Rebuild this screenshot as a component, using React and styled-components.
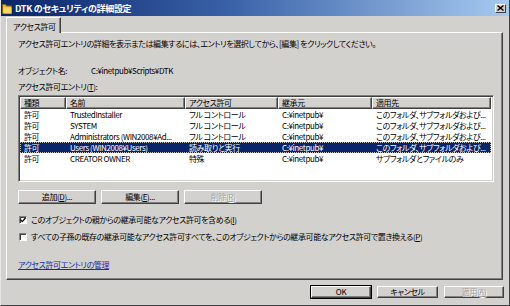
import React from "react";
import styled, { createGlobalStyle, css } from "styled-components";

const Global = createGlobalStyle`
  html, body {
    margin: 0;
    padding: 0;
    background: #d2d1ce;
    overflow: hidden;
  }
  body {
    font-family: "Noto Sans CJK JP", "Liberation Sans", sans-serif;
    font-size: 8px;
    letter-spacing: -0.4px;
    font-feature-settings: "palt";
    color: #000;
  }
`;

const face = "#d2d1ce";

const entries = [
  { kind: "許可", name: "TrustedInstaller", access: "フル コントロール", from: "C:¥inetpub¥", to: "このフォルダ、サブフォルダおよび..." },
  { kind: "許可", name: "SYSTEM", access: "フル コントロール", from: "C:¥inetpub¥", to: "このフォルダ、サブフォルダおよび..." },
  { kind: "許可", name: "Administrators (WIN2008¥Ad...", access: "フル コントロール", from: "C:¥inetpub¥", to: "このフォルダ、サブフォルダおよび..." },
  { kind: "許可", name: "Users (WIN2008¥Users)", access: "読み取りと実行", from: "C:¥inetpub¥", to: "このフォルダ、サブフォルダおよび...", selected: true },
  { kind: "許可", name: "CREATOR OWNER", access: "特殊", from: "C:¥inetpub¥", to: "サブフォルダとファイルのみ" },
];

const columns = "46px 119px 93px 94px 1fr";

const App = () => {
  return (
    <>
      <Global />
      <Window>
        <TitleBar>
          <FolderIcon width="10" height="12" viewBox="0 0 10 12">
            <path d="M0.5 2.5h3l1 1.5h5v7.5h-9z" fill="#e8b830" stroke="#8a6410" strokeWidth="1" />
            <path d="M1.5 5.5h8v6h-8z" fill="#f8d860" />
          </FolderIcon>
          <Title>DTK のセキュリティの詳細設定</Title>
          <CloseButton>
            <svg width="7" height="6" viewBox="0 0 7 6">
              <path d="M0.5 0.5l6 5M6.5 0.5l-6 5" stroke="#000" strokeWidth="1.4" />
            </svg>
          </CloseButton>
        </TitleBar>

        <Main>
          <Tabs>
            <Tab>アクセス許可</Tab>
          </Tabs>
          <Panel>
            <Line $top={5}>
              アクセス許可エントリの詳細を表示または編集するには、エントリを選択してから、[編集] をクリックしてください。
            </Line>
            <ObjectRow>
              <ObjectLabel>オブジェクト名:</ObjectLabel>
              <span>C:¥inetpub¥Scripts¥DTK</span>
            </ObjectRow>
            <Line $top={4}>アクセス許可エントリ(<u>T</u>):</Line>

            <ListBox>
              <HeaderRow>
                <HeaderCell>種類</HeaderCell>
                <HeaderCell>名前</HeaderCell>
                <HeaderCell>アクセス許可</HeaderCell>
                <HeaderCell>継承元</HeaderCell>
                <HeaderCell>適用先</HeaderCell>
              </HeaderRow>
              {entries.map((e) => (
                <Row key={e.name} $selected={e.selected}>
                  <Cell>{e.kind}</Cell>
                  <Cell>{e.name}</Cell>
                  <Cell>{e.access}</Cell>
                  <Cell>{e.from}</Cell>
                  <Cell>{e.to}</Cell>
                </Row>
              ))}
            </ListBox>

            <ButtonRow>
              <Button $w={78}>追加(<u>D</u>)...</Button>
              <Button $w={78}>編集(<u>E</u>)...</Button>
              <Button $w={78} disabled>削除(<u>R</u>)</Button>
            </ButtonRow>

            <CheckRow $top={10}>
              <CheckBox>
                <svg width="6" height="6" viewBox="0 0 6 6">
                  <path d="M0.5 2.8l1.8 1.8 3.2-3.6" stroke="#000" strokeWidth="1.3" fill="none" />
                </svg>
              </CheckBox>
              <span>このオブジェクトの親からの継承可能なアクセス許可を含める(<u>I</u>)</span>
            </CheckRow>
            <CheckRow $top={5}>
              <CheckBox />
              <span>
                すべての子孫の既存の継承可能なアクセス許可すべてを、このオブジェクトからの継承可能なアクセス許可で置き換える(<u>P</u>)
              </span>
            </CheckRow>

            <Link>アクセス許可エントリの管理</Link>
          </Panel>
        </Main>

        <Footer>
          <Button $w={60} $h={12} $default>OK</Button>
          <Button $w={61} $h={12}>キャンセル</Button>
          <Button $w={60} $h={12} disabled>適用(<u>A</u>)</Button>
        </Footer>
      </Window>
    </>
  );
};

const Window = styled.div`
  width: 510px;
  height: 306px;
  box-sizing: border-box;
  background: ${face};
  border-left: 1px solid #e8e8e8;
  border-right: 1px solid #404040;
  border-bottom: 1px solid #404040;
  display: flex;
  flex-direction: column;
`;

const TitleBar = styled.div`
  height: 16px;
  display: flex;
  align-items: center;
  padding: 0 3px 0 1px;
  background: linear-gradient(to right, #0a246a 0%, #3a62a8 45%, #a6caf0 100%);
`;

const FolderIcon = styled.svg`
  flex: none;
  margin-right: 3px;
`;

const Title = styled.div`
  flex: 1;
  color: #fff;
  font-weight: bold;
  font-size: 9px;
  letter-spacing: -0.3px;
  white-space: nowrap;
`;

const CloseButton = styled.div`
  width: 11px;
  height: 9px;
  box-sizing: border-box;
  background: ${face};
  border: 1px solid;
  border-color: #fff #404040 #404040 #fff;
  display: flex;
  align-items: center;
  justify-content: center;
`;

const Main = styled.div`
  padding: 1px 6px 0 5px;
`;

const Tabs = styled.div`
  height: 15px;
  display: flex;
  align-items: flex-end;
`;

const Tab = styled.div`
  height: 16px;
  margin-bottom: -1px;
  position: relative;
  z-index: 1;
  width: 55px;
  box-sizing: border-box;
  padding: 3px 0 0 6px;
  background: ${face};
  border: 1px solid;
  border-bottom: none;
  border-color: #fff #404040 transparent #fff;
  box-shadow: inset -1px 0 #808080;
  white-space: nowrap;
`;

const Panel = styled.div`
  height: 248px;
  box-sizing: border-box;
  border: 1px solid;
  border-color: #fff #404040 #404040 #fff;
  box-shadow: inset -1px -1px #808080;
  padding: 0 8px 0 11px;
  display: flex;
  flex-direction: column;
`;

const Line = styled.div`
  height: 12px;
  line-height: 12px;
  margin-top: ${(p) => p.$top}px;
  white-space: nowrap;
`;

const ObjectRow = styled.div`
  height: 12px;
  line-height: 12px;
  margin-top: 15px;
  display: flex;
  white-space: nowrap;
`;

const ObjectLabel = styled.span`
  width: 73px;
  flex: none;
`;

const ListBox = styled.div`
  margin-top: 2px;
  height: 87px;
  box-sizing: border-box;
  background: #fff;
  border: 1px solid;
  border-color: #808080 #fff #fff #808080;
  box-shadow: inset 1px 1px #404040, inset -1px -1px ${face};
  padding: 1px;
  overflow: hidden;
`;

const HeaderRow = styled.div`
  display: grid;
  grid-template-columns: ${columns};
  height: 12px;
  margin-right: 1px;
`;

const HeaderCell = styled.div`
  background: ${face};
  border: 1px solid;
  border-color: #fff #404040 #404040 #fff;
  box-shadow: inset -1px -1px #808080;
  padding-left: 3px;
  line-height: 10px;
  white-space: nowrap;
  overflow: hidden;
`;

const Row = styled.div`
  display: grid;
  grid-template-columns: ${columns};
  height: 11px;
  line-height: 11px;
  margin-right: 1px;
  box-sizing: border-box;
  ${(p) =>
    p.$selected &&
    css`
      background: #0a246a;
      color: #fff;
      outline: 1px dotted #c0c0c0;
      outline-offset: -1px;
    `}
`;

const Cell = styled.div`
  padding-left: 4px;
  white-space: nowrap;
  overflow: hidden;
`;

const ButtonRow = styled.div`
  margin-top: 8px;
  display: flex;
  gap: 5px;
`;

const Button = styled.button`
  width: ${(p) => p.$w}px;
  height: ${(p) => p.$h || 14}px;
  box-sizing: border-box;
  padding: 0;
  margin: 0;
  font: inherit;
  letter-spacing: inherit;
  line-height: 1;
  color: #000;
  background: ${face};
  border: 1px solid;
  border-color: #fff #404040 #404040 #fff;
  box-shadow: inset -1px -1px #808080;
  display: flex;
  align-items: center;
  justify-content: center;
  ${(p) =>
    p.$default &&
    css`
      outline: 1px solid #000;
      outline-offset: 0;
    `}
  &:disabled {
    color: #a0a0a0;
    text-shadow: 1px 1px #fff;
  }
`;

const CheckRow = styled.div`
  margin-top: ${(p) => p.$top}px;
  height: 12px;
  line-height: 12px;
  display: flex;
  align-items: center;
  gap: 4px;
  padding-left: 1px;
  white-space: nowrap;
`;

const CheckBox = styled.div`
  width: 8px;
  height: 8px;
  box-sizing: border-box;
  background: #fff;
  border: 1px solid;
  border-color: #808080 #fff #fff #808080;
  box-shadow: inset 1px 1px #404040;
  display: flex;
  align-items: center;
  justify-content: center;
  flex: none;
`;

const Link = styled.div`
  margin-top: 16px;
  height: 12px;
  line-height: 12px;
  color: #1530a8;
  text-decoration: underline;
`;

const Footer = styled.div`
  display: flex;
  justify-content: flex-end;
  gap: 6px;
  padding: 6px 5px 0 0;
`;

export default App;
